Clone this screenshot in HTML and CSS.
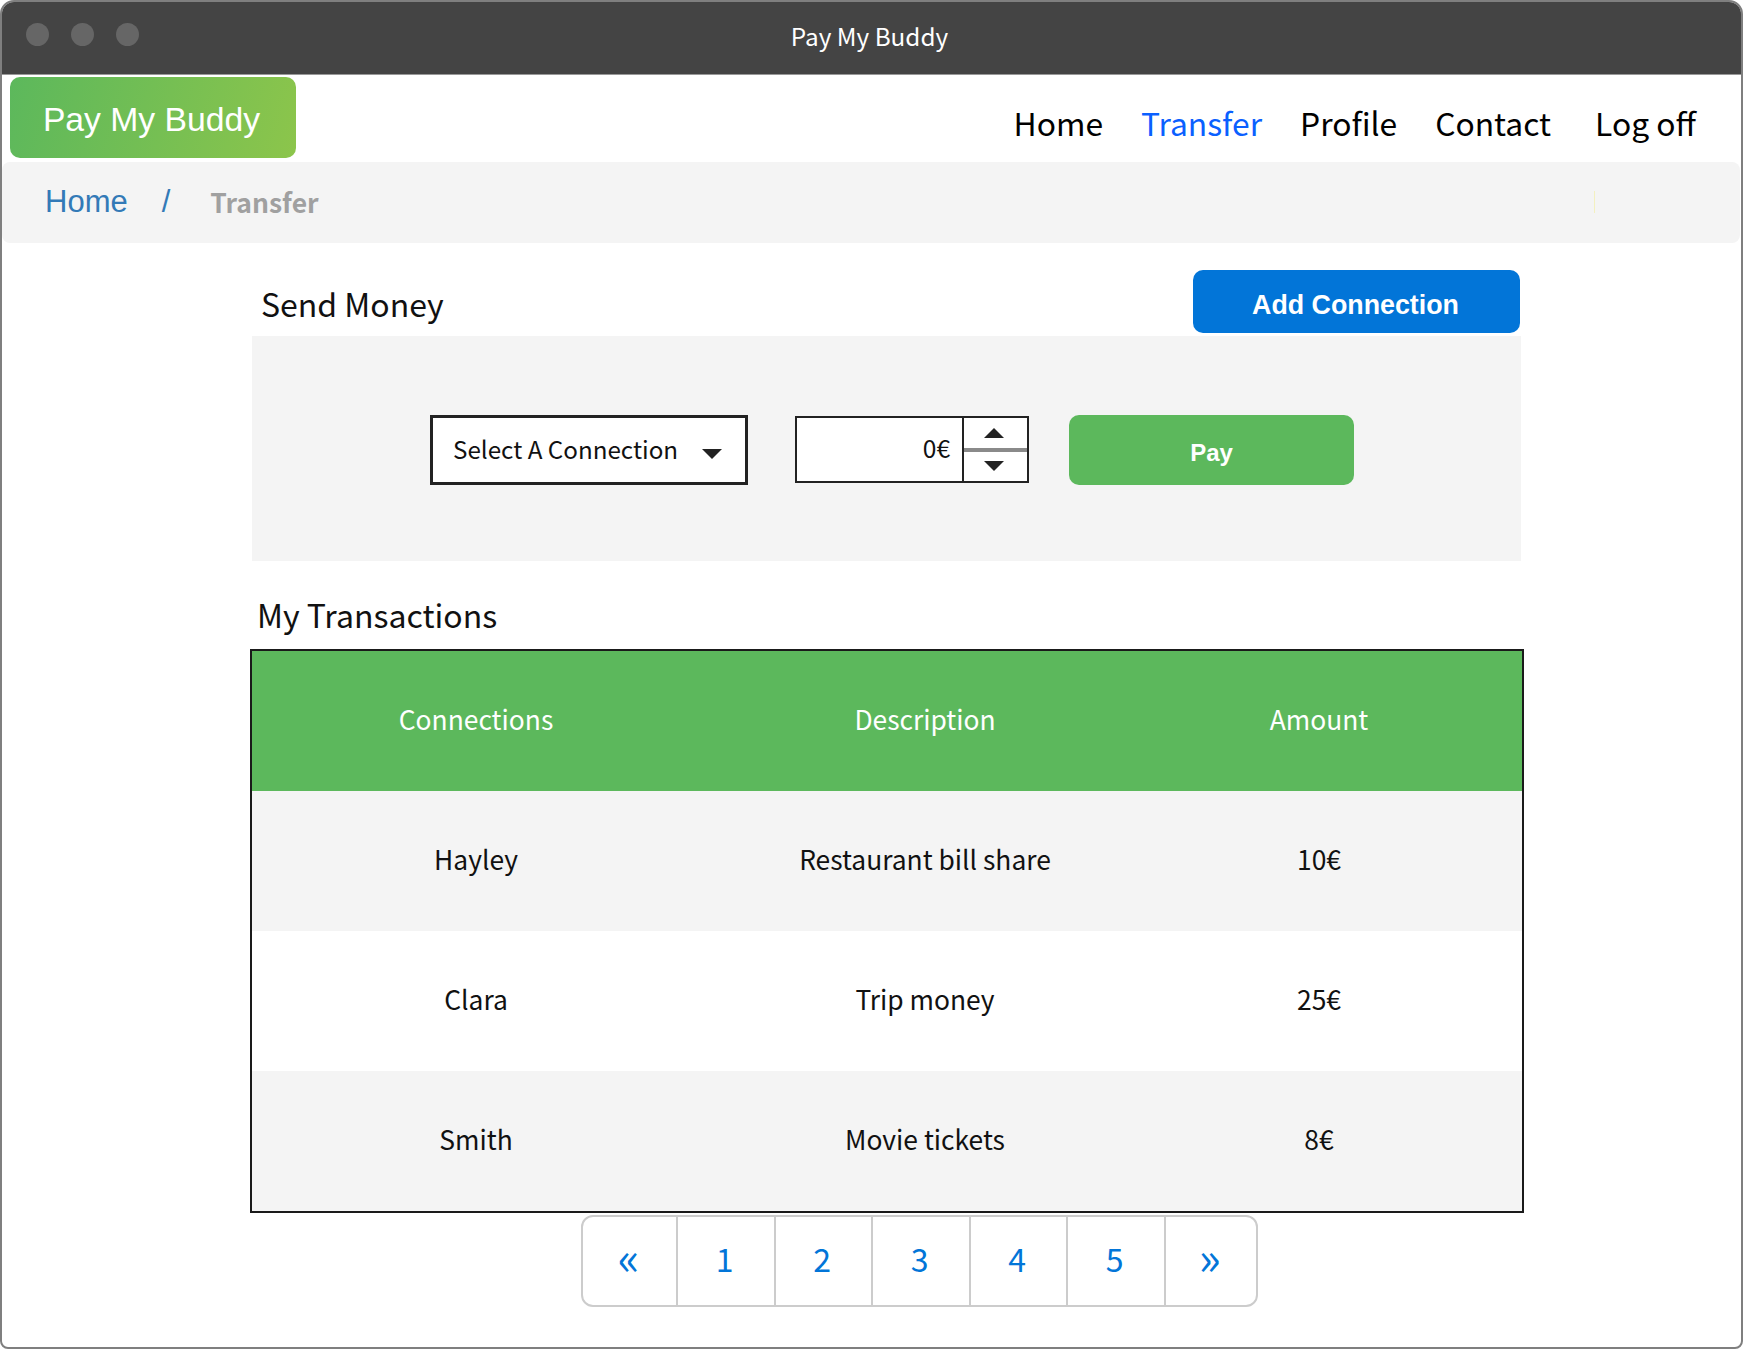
FILE: index.html
```html
<!DOCTYPE html>
<html lang="en">

<head>
	<meta charset="UTF-8" />
	<title>Pay My Buddy</title>
	<link rel="stylesheet" href="styles.css">
</head>

<body>
	<div class="window">
		<div class="title-bar">
			<div class="dots">
				<span class="dot"></span>
				<span class="dot"></span>
				<span class="dot"></span>
			</div>
			<span class="title-text">Pay My Buddy</span>
		</div>

		<nav class="top-nav">
			<a href="#" class="logo">Pay My Buddy</a>
			<div class="nav-links">
				<a href="#" class="nav-link">Home</a>
				<a href="#" class="nav-link active">Transfer</a>
				<a href="#" class="nav-link">Profile</a>
				<a href="#" class="nav-link">Contact</a>
				<a href="#" class="nav-link logoff">Log off</a>
			</div>
		</nav>

		<div class="breadcrumb">
			<a href="#" class="crumb-link">Home</a>
			<span class="crumb-sep">/</span>
			<span class="crumb-current">Transfer</span>
			<span class="crumb-tick"></span>
		</div>

		<main class="content">
			<div class="send-head">
				<h2 class="section-title">Send Money</h2>
				<button class="add-btn">Add Connection</button>
			</div>

			<div class="send-panel">
				<div class="select-box">
					<span>Select A Connection</span>
					<span class="caret"></span>
				</div>
				<div class="amount-box">
					<span class="amount-value">0€</span>
					<div class="spinner">
						<div class="spin-btn"><span class="arrow-up"></span></div>
						<div class="spin-btn"><span class="caret"></span></div>
					</div>
				</div>
				<button class="pay-btn">Pay</button>
			</div>

			<h2 class="section-title transactions-title">My Transactions</h2>

			<div class="table">
				<div class="row head">
					<div>Connections</div>
					<div>Description</div>
					<div>Amount</div>
				</div>
				<div class="row shaded">
					<div>Hayley</div>
					<div>Restaurant bill share</div>
					<div>10€</div>
				</div>
				<div class="row">
					<div>Clara</div>
					<div>Trip money</div>
					<div>25€</div>
				</div>
				<div class="row shaded">
					<div>Smith</div>
					<div>Movie tickets</div>
					<div>8€</div>
				</div>
			</div>

			<div class="pagination">
				<a href="#" class="page page-arrow">«</a>
				<a href="#" class="page">1</a>
				<a href="#" class="page">2</a>
				<a href="#" class="page">3</a>
				<a href="#" class="page">4</a>
				<a href="#" class="page">5</a>
				<a href="#" class="page page-arrow">»</a>
			</div>
		</main>
	</div>
</body>

</html>
```

FILE: styles.css
```css
* {
	box-sizing: border-box;
}

html,
body {
	margin: 0;
	height: 100%;
	overflow: hidden;
}

body {
	font-family: "Noto Sans CJK JP", "Noto Sans", sans-serif;
	background-color: #fff;
	color: #111;
}

a {
	text-decoration: none;
}

.window {
	height: 1349px;
	border: 2px solid #7f7f7f;
	border-radius: 14px 14px 8px 8px;
	overflow: hidden;
}

.title-bar {
	position: relative;
	height: 73px;
	background-color: #444;
	display: flex;
	align-items: center;
	justify-content: center;
	border-bottom: 1px solid #999;
}

.dots {
	position: absolute;
	left: 24px;
	top: 21px;
	display: flex;
	gap: 22px;
}

.dot {
	width: 23px;
	height: 23px;
	border-radius: 50%;
	background-color: #666;
}

.title-text {
	color: #fff;
	font-size: 24.3px;
	margin-top: -5px;
	margin-right: 4px;
}

.top-nav {
	height: 87px;
	display: flex;
	justify-content: space-between;
	padding: 2px 45px 0 8px;
}

.logo {
	width: 286px;
	height: 81px;
	border-radius: 10px;
	background: linear-gradient(105deg, #5cb85c, #8cc54b);
	color: #fff;
	font-family: "Liberation Sans", Arial, sans-serif;
	font-size: 33.7px;
	display: flex;
	align-items: center;
	justify-content: center;
	padding: 4px 3px 0 0;
}

.nav-links {
	display: flex;
	align-items: center;
	gap: 38px;
	padding-top: 6px;
}

.nav-link {
	color: #000;
	font-size: 31.8px;
	line-height: 1;
}

.nav-link.active {
	color: #0a60ff;
}

.nav-link.logoff {
	margin-left: 6px;
}

.breadcrumb {
	height: 81px;
	margin-right: 1px;
	background-color: #f4f4f4;
	border-radius: 8px;
	display: flex;
	align-items: center;
	padding: 0 0 2px 43px;
}

.crumb-link {
	color: #337ab7;
	font-family: "Liberation Sans", Arial, sans-serif;
	font-size: 31px;
}

.crumb-sep {
	color: #337ab7;
	font-family: "Liberation Sans", Arial, sans-serif;
	font-size: 31px;
	margin-left: 34px;
}

.crumb-current {
	color: #a0a0a0;
	font-size: 26.5px;
	font-weight: 700;
	margin-left: 40px;
}

.crumb-tick {
	width: 1px;
	height: 22px;
	background-color: #f3f0c0;
	margin-left: auto;
	margin-right: 145px;
}

.content {
	width: 1275px;
	margin-left: 248px;
}

.send-head {
	display: flex;
	justify-content: space-between;
	align-items: center;
	height: 63px;
	margin-top: 27px;
	margin-bottom: 3px;
	padding-right: 5px;
}

.section-title {
	margin: 0;
	font-size: 32px;
	font-weight: 400;
	line-height: 1;
	color: #111;
	padding-left: 11px;
	padding-top: 2px;
}

.add-btn {
	width: 327px;
	height: 63px;
	border: none;
	border-radius: 10px;
	background-color: #0275d8;
	color: #fff;
	font-family: "Liberation Sans", Arial, sans-serif;
	font-size: 26.8px;
	font-weight: 700;
	padding: 8px 2px 0 0;
}

.send-panel {
	height: 225px;
	margin-left: 2px;
	margin-right: 4px;
	background-color: #f4f4f4;
	display: flex;
	align-items: flex-start;
	padding: 79px 0 0 178px;
}

.select-box {
	width: 318px;
	height: 70px;
	border: 3px solid #222;
	background-color: #fff;
	font-size: 24.2px;
	display: flex;
	align-items: center;
	justify-content: space-between;
	padding: 0 23px 4px 20px;
}

.select-box .caret {
	margin-top: 12px;
}

.caret {
	width: 0;
	height: 0;
	border-left: 10px solid transparent;
	border-right: 10px solid transparent;
	border-top: 10px solid #222;
}

.arrow-up {
	width: 0;
	height: 0;
	border-left: 10px solid transparent;
	border-right: 10px solid transparent;
	border-bottom: 10px solid #222;
}

.amount-box {
	width: 234px;
	height: 67px;
	margin-left: 47px;
	margin-top: 1px;
	border: 2px solid #222;
	background-color: #fff;
	display: flex;
}

.amount-value {
	flex: 1;
	font-size: 24.5px;
	text-align: right;
	padding-right: 12px;
	line-height: 59px;
	border-right: 2px solid #222;
}

.spinner {
	width: 63px;
	display: flex;
	flex-direction: column;
}

.spin-btn {
	flex: 1;
	display: flex;
	align-items: center;
	justify-content: center;
	padding-right: 3px;
}

.spin-btn:first-child {
	border-bottom: 4px solid #8a8a8a;
}

.pay-btn {
	width: 285px;
	height: 70px;
	margin-left: 40px;
	border: none;
	border-radius: 10px;
	background-color: #5cb85c;
	color: #fff;
	font-family: "Liberation Sans", Arial, sans-serif;
	font-size: 24px;
	font-weight: 700;
	padding-top: 7px;
}

.transactions-title {
	padding-left: 7px;
	padding-top: 37px;
	height: 88px;
}

.table {
	width: 1274px;
	height: 564px;
	border: 2px solid #1a1a1a;
	display: grid;
	grid-template-rows: repeat(4, 1fr);
}

.row {
	display: grid;
	grid-template-columns: 448px 450px 338px;
	align-items: center;
	text-align: center;
	font-size: 26.4px;
	padding-bottom: 5px;
}

.row.head {
	background-color: #5cb85c;
	color: #fff;
}

.row.shaded {
	background-color: #f4f4f4;
}

.pagination {
	width: 677px;
	height: 92px;
	margin: 2px 0 0 331px;
	border: 2px solid #ccc;
	border-radius: 12px;
	display: flex;
}

.page {
	flex: 0 0 97.5px;
	display: flex;
	align-items: center;
	justify-content: center;
	color: #0275d8;
	font-size: 32px;
	border-left: 2px solid #ccc;
	padding: 0 2px 7px 0;
}

.page-arrow {
	font-size: 46px;
	padding-bottom: 13px;
}

.page:first-child {
	flex-basis: 93px;
	border-left: none;
}

.page:last-child {
	flex: 1;
}
```
